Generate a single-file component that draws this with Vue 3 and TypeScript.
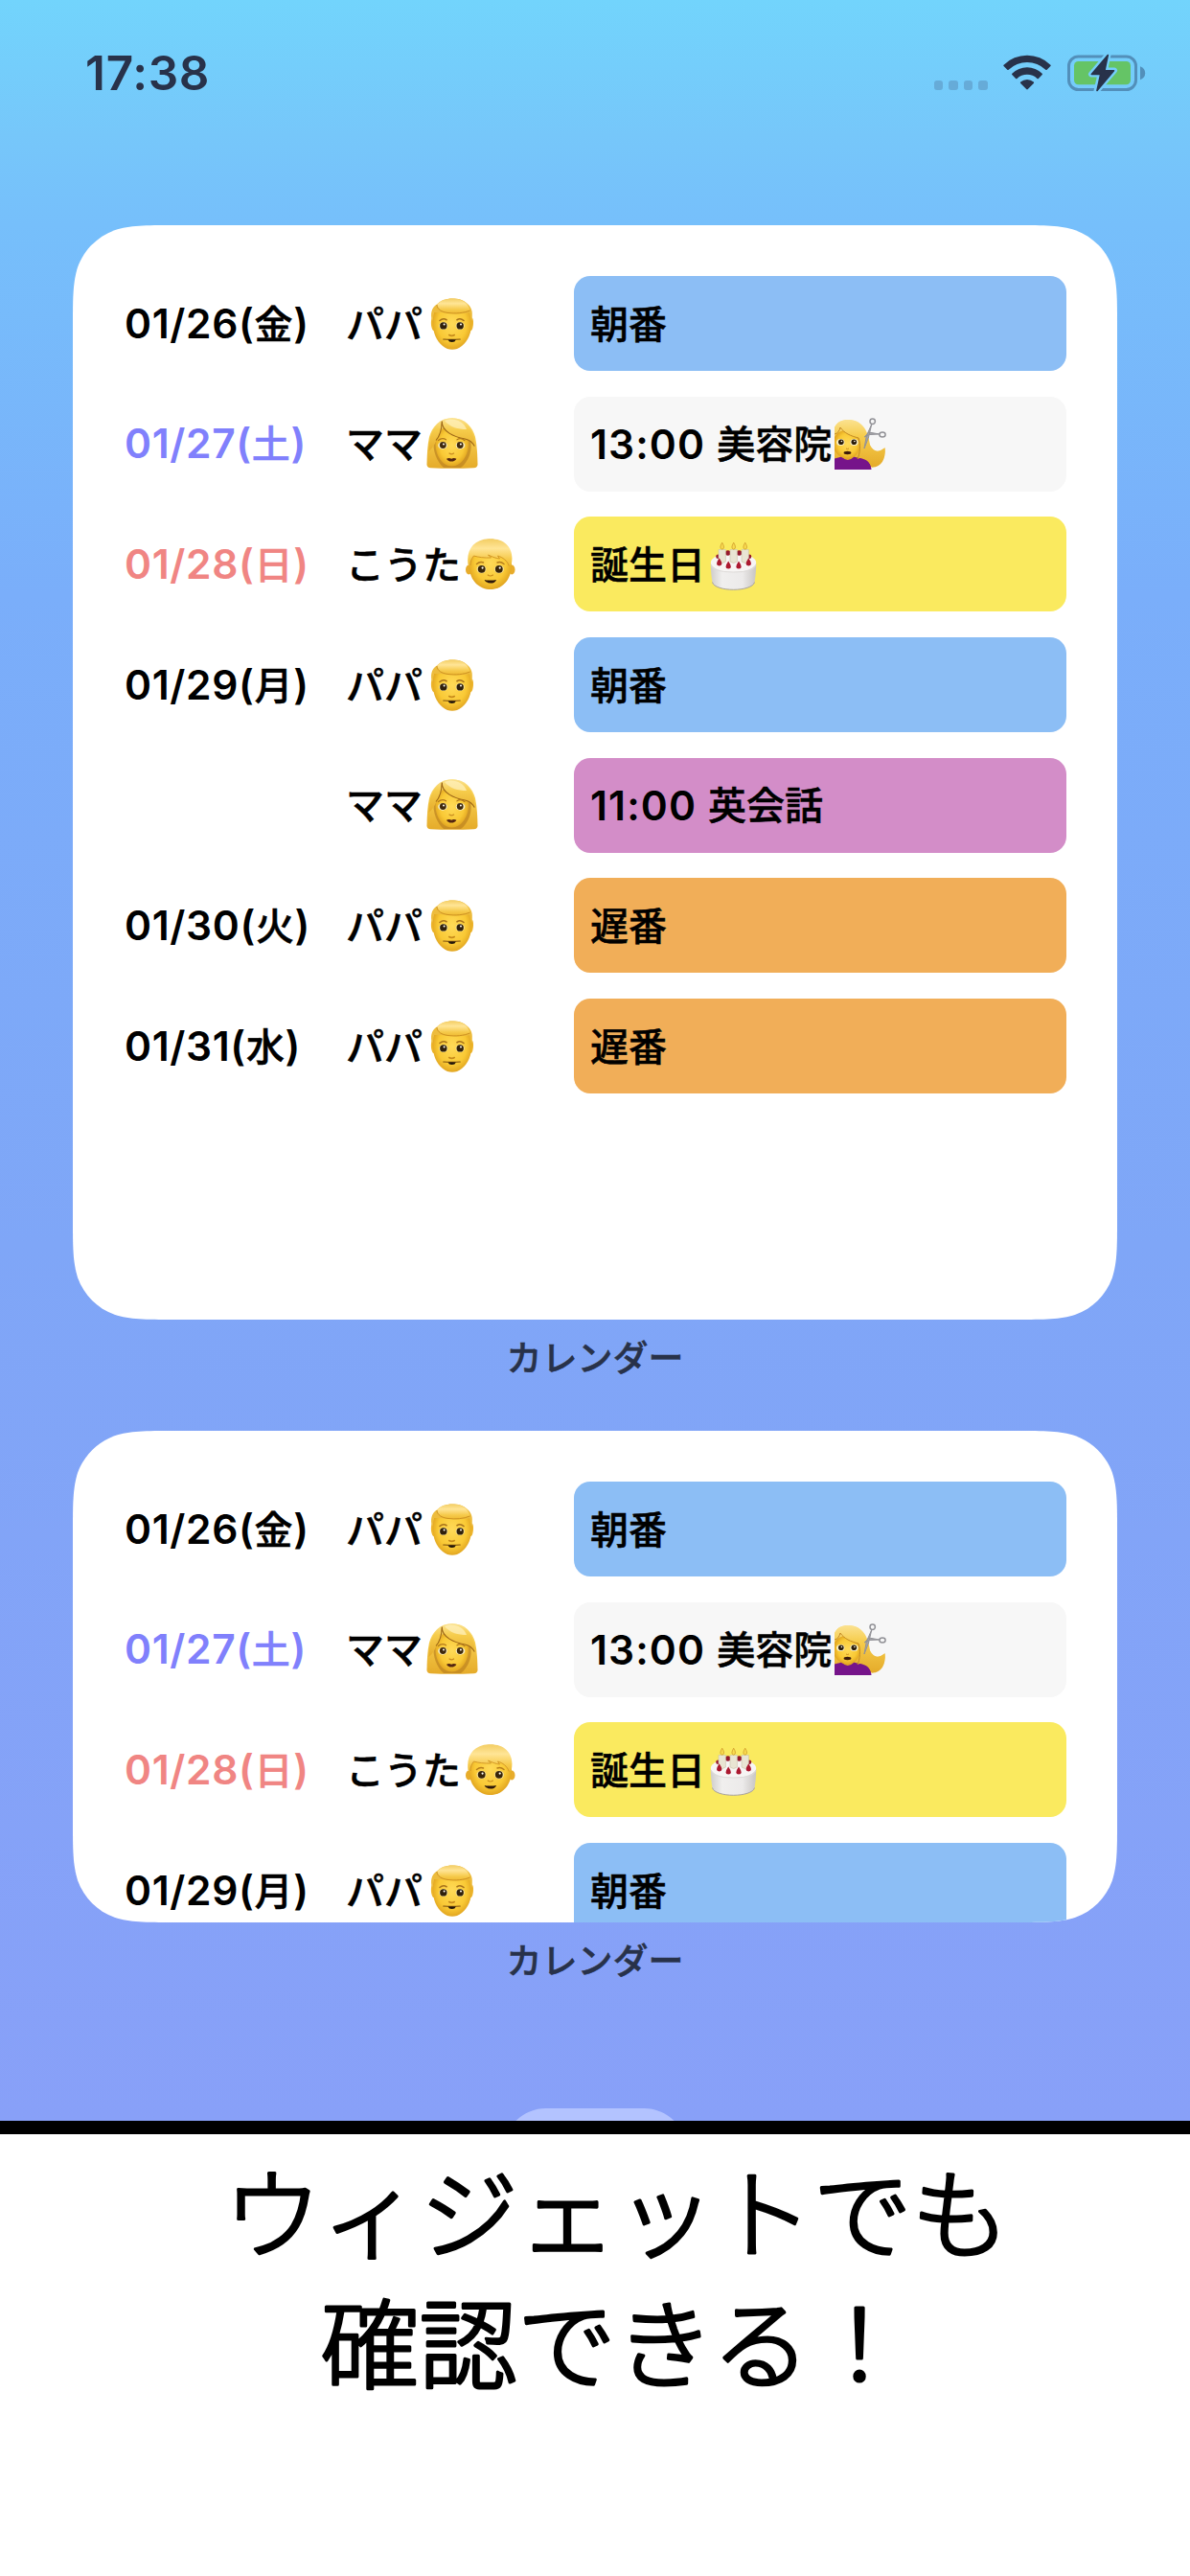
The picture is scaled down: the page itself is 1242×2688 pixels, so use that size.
<script setup lang="ts">
type Tone = 'weekday' | 'saturday' | 'sunday'

interface Entry {
  day: string
  weekday: string
  tone: Tone
  name: string
  face: string
  color: string
  time?: string
  title: string
  icon?: string
}

const entries: Entry[] = [
  { day: '01/26', weekday: '金', tone: 'weekday', name: 'パパ', face: 'man', color: 'blue', title: '朝番' },
  { day: '01/27', weekday: '土', tone: 'saturday', name: 'ママ', face: 'woman', color: 'plain', time: '13:00', title: '美容院', icon: 'haircut' },
  { day: '01/28', weekday: '日', tone: 'sunday', name: 'こうた', face: 'boy', color: 'yellow', title: '誕生日', icon: 'cake' },
  { day: '01/29', weekday: '月', tone: 'weekday', name: 'パパ', face: 'man', color: 'blue', title: '朝番' },
  { day: '', weekday: '', tone: 'weekday', name: 'ママ', face: 'woman', color: 'pink', time: '11:00', title: '英会話' },
  { day: '01/30', weekday: '火', tone: 'weekday', name: 'パパ', face: 'man', color: 'orange', title: '遅番' },
  { day: '01/31', weekday: '水', tone: 'weekday', name: 'パパ', face: 'man', color: 'orange', title: '遅番' },
]

// Continuous-curvature rounded rectangle, as used for home screen widgets.
function continuousRect(w: number, h: number, r: number): string {
  const a = 1.528665 * r
  const b = 1.088493 * r
  const c = 0.868407 * r
  const d = 0.631494 * r
  const e = 0.074911 * r
  const f = 0.372824 * r
  const g = 0.16906 * r
  return [
    `M${a} 0H${w - a}`,
    `C${w - b} 0 ${w - c} 0 ${w - d} ${e}`,
    `C${w - f} ${g} ${w - g} ${f} ${w - e} ${d}`,
    `C${w} ${c} ${w} ${b} ${w} ${a}`,
    `V${h - a}`,
    `C${w} ${h - b} ${w} ${h - c} ${w - e} ${h - d}`,
    `C${w - g} ${h - f} ${w - f} ${h - g} ${w - d} ${h - e}`,
    `C${w - c} ${h} ${w - b} ${h} ${w - a} ${h}`,
    `H${a}`,
    `C${b} ${h} ${c} ${h} ${d} ${h - e}`,
    `C${f} ${h - g} ${g} ${h - f} ${e} ${h - d}`,
    `C0 ${h - c} 0 ${h - b} 0 ${h - a}`,
    `V${a}`,
    `C0 ${b} 0 ${c} ${e} ${d}`,
    `C${g} ${f} ${f} ${g} ${d} ${e}`,
    `C${c} 0 ${b} 0 ${a} 0Z`,
  ].join('')
}

const widgets = [
  { id: 'large', height: 1142, rows: entries },
  { id: 'medium', height: 513, rows: entries.slice(0, 4) },
].map((w) => ({
  ...w,
  shape: { height: `${w.height}px`, clipPath: `path('${continuousRect(1090, w.height, 69)}')` },
}))
</script>

<template>
  <main class="page">
    <svg class="symbols" width="0" height="0" aria-hidden="true">
      <defs>
        <radialGradient id="skin" cx="50%" cy="48%" r="56%">
          <stop offset="0" stop-color="#ffda58" />
          <stop offset=".65" stop-color="#f9c935" />
          <stop offset="1" stop-color="#dc9d1c" />
        </radialGradient>
        <linearGradient id="hair" x1="0" y1="0" x2="0" y2="1">
          <stop offset="0" stop-color="#fbe290" />
          <stop offset=".35" stop-color="#f6cc4b" />
          <stop offset="1" stop-color="#e5ab2a" />
        </linearGradient>
        <linearGradient id="cap" x1="0" y1="0" x2="0" y2="1">
          <stop offset="0" stop-color="#f3cd63" />
          <stop offset=".35" stop-color="#ffe596" />
          <stop offset=".75" stop-color="#f6ca4b" />
          <stop offset="1" stop-color="#efbb35" />
        </linearGradient>
        <linearGradient id="icing" x1="0" y1="0" x2="1" y2="0">
          <stop offset="0" stop-color="#cfcdcb" />
          <stop offset=".25" stop-color="#f0efee" />
          <stop offset=".7" stop-color="#eceaea" />
          <stop offset="1" stop-color="#c8c5c3" />
        </linearGradient>
      </defs>

      <symbol id="man" viewBox="0 0 54 54">
        <path d="M6.500 20C4.600 22 4.600 27 5.600 31c.5 2.300 1.600 3.200 2.700 3.200M47.500 20c1.900 2 1.900 7 .9 11-.5 2.300-1.600 3.200-2.700 3.200" fill="#eeb52c" />
        <path d="M27 2C14 2 6.500 9 6.500 23c0 14 4.500 22 10.500 27 3.400 2.700 6.500 3.800 10 3.800s6.600-1.100 10-3.800c6-5 10.500-13 10.500-27C47.500 9 40 2 27 2Z" fill="url(#skin)" />
        <path d="M11 6.500C5 10 4 17 6 24c1-4 1.800-6 2-9 4 0 8 0 12 .6 10 1.300 18 .9 25-.3 1 3.700 1 5.700 2 8.700 1.600-7 1.400-13-3.500-17.500C38 1 33 .4 27.500.4 20 .4 14.500 2.500 11 6.500Z" fill="#edbc3d" />
        <path d="M11 6.800C14 2.600 20 .4 27.500.4c8 0 15.500 3 18 12C40 15.500 30 16.400 22 15.200c-6-.9-10.500-3.500-11-8.400Z" fill="url(#cap)" />
        <path d="M11 7c.5 5 5 7.500 11 8.400 8 1.200 17 .4 23.500-2.400" fill="none" stroke="#c98c1d" stroke-width=".9" />
        <path d="M14 23.500q3.500-3 7-.8M32 22.700q3.500-2.200 7 .8" fill="none" stroke="#a8721a" stroke-width="1.600" stroke-linecap="round" />
        <ellipse cx="17.800" cy="29" rx="4.600" ry="4" fill="#f6e6a6" /><ellipse cx="35.200" cy="29" rx="4.600" ry="4" fill="#f6e6a6" />
        <circle cx="17.800" cy="28.900" r="3.700" fill="#30200b" /><circle cx="35.200" cy="28.900" r="3.700" fill="#30200b" />
        <circle cx="18.600" cy="27.600" r="1" fill="#fff" /><circle cx="36" cy="27.600" r="1" fill="#fff" />
        <path d="M23.700 38.500q2.800 1.800 5.600 0" fill="none" stroke="#c88c1c" stroke-width="1.600" stroke-linecap="round" />
        <path d="M17.800 43q8.700.8 17.400 0" fill="none" stroke="#7a4c0d" stroke-width="1.200" stroke-linecap="round" />
        <path d="M22.500 43.400h8.400q-1 2.500-4.200 2.500t-4.200-2.500Z" fill="#21150a" />
      </symbol>

      <symbol id="woman" viewBox="0 0 54 54">
        <path d="M27 .3C14 .3 6 9 3 20 1 29 .7 40 .5 48.500c0 2.500 1.500 3.500 4 3.700 15 .8 30 .8 45 0 2.500-.2 4-1.200 4-3.700C53.300 40 53 29 51 20 48 9 40 .3 27 .3Z" fill="url(#hair)" />
        <path d="M8 25C6 33 11 46 18 52h18c8-6 12.500-19 10-28Z" fill="#b97e1d" opacity=".65" />
        <path d="M27 8C16 8 9.500 17 9.500 27c0 12 7 23.500 17 23.500S44 39 44 27C44 17 38 8 27 8Z" fill="url(#skin)" />
        <path d="M16 3C6 9 2 22 2.500 35 6 32 9 28 10.500 23 13.500 19 16 13 16.500 8 19 16 30 20 40 22c4 1 8 4.500 10.500 8C51 15 43 .5 27 .3 22.500.3 19 1.200 16 3Z" fill="url(#hair)" />
        <path d="M16.300 3.500c-.5 11 13 16.500 24 18.500 4 .8 8 4 10 7.500M16.200 4C16 13 14 19 10 23.500" fill="none" stroke="#9b6516" stroke-width="1.100" />
        <path d="M19 3c8-4 20 0 23 9-9 0-17-2-23-9Z" fill="#fff0bb" opacity=".75" />
        <path d="M12.500 23.500q4-3.400 8-.7M32 22.800q4-2.700 8 .9" fill="none" stroke="#b2781b" stroke-width="1.200" stroke-linecap="round" />
        <ellipse cx="17" cy="28.800" rx="4.800" ry="3.900" fill="#f8efc8" /><ellipse cx="35.500" cy="28.800" rx="4.800" ry="3.900" fill="#f8efc8" />
        <circle cx="17.300" cy="28.500" r="3.400" fill="#402a0c" /><circle cx="35.200" cy="28.500" r="3.400" fill="#402a0c" />
        <circle cx="18" cy="27.500" r="1" fill="#fff" /><circle cx="35.900" cy="27.500" r="1" fill="#fff" />
        <path d="M24 37q2.300 1.800 4.600 0" fill="none" stroke="#ca8d20" stroke-width="1.200" stroke-linecap="round" />
        <path d="M21 42.700q2.800-1.200 5.200 0 2.400-1.200 5.200 0-1.500 2.800-5.200 2.800T21 42.700Z" fill="#542611" />
      </symbol>

      <symbol id="boy" viewBox="0 0 54 54">
        <ellipse cx="4.300" cy="32.500" rx="3.300" ry="5" fill="#e8ac2b" /><ellipse cx="49.200" cy="32.500" rx="3.300" ry="5" fill="#e8ac2b" />
        <path d="M26.800.8C12 .8 4.500 11 4.500 27c0 16 10 26 22.300 26S49 43 49 27C49 11 41.500.8 26.800.8Z" fill="url(#skin)" />
        <path d="M26.800.3C10 .3 1.500 11 3.500 27c1 1 1.800 1.600 2.400 1.600C6 24 7 21 9.500 18c5 1.500 11 2.300 18 2L24.500 17c5 2.500 8.500 3.600 12 4L34.500 18c5 1.500 10 5 11.800 10.500 1-.4 1.700-1 2.400-1.500C52 12 44 .3 26.800.3Z" fill="url(#cap)" />
        <path d="M5.900 28C6 24 7 21 9.500 18c5 1.500 11 2.300 18 2L24.500 17c5 2.500 8.500 3.600 12 4L34.500 18c5 1.500 10 5 11.800 10.500" fill="none" stroke="#cf9324" stroke-width=".9" />
        <path d="M12.500 26.500q3.500-3 7-1.500M34 25q3.500-1.500 7 1.500" fill="none" stroke="#b57c1b" stroke-width="1.400" stroke-linecap="round" />
        <ellipse cx="17.500" cy="32" rx="5" ry="4.200" fill="#f6e39a" /><ellipse cx="36" cy="32" rx="5" ry="4.200" fill="#f6e39a" />
        <circle cx="17.700" cy="31.800" r="3.900" fill="#382509" /><circle cx="35.800" cy="31.800" r="3.900" fill="#382509" />
        <circle cx="18.600" cy="30.600" r="1.100" fill="#fff" /><circle cx="36.700" cy="30.600" r="1.100" fill="#fff" />
        <path d="M24.200 38q2.600 2 5.200 0" fill="none" stroke="#c88c1c" stroke-width="1.200" stroke-linecap="round" />
        <path d="M20.500 42.900q6.300 1.300 12.600 0-1.300 3.600-6.300 3.600t-6.300-3.600Z" fill="#2d170a" />
      </symbol>

      <symbol id="haircut" viewBox="0 0 54 54">
        <path d="M0 10C3 4 8 2 14 2c10 0 17 6 19 15 2 10 6 17 12 18 3 0 5-1.500 7.500-3.800C53.500 41 49 50 39 51.500L30 49 0 44Z" fill="url(#hair)" />
        <path d="M0 54V42.500c4-1 7-1.700 8-2.500h11c3 1.700 8 1.500 12.500 3.500 4.500 2 6.500 5 7 10.500Z" fill="#76148a" />
        <path d="M7.500 40.500q6 7 13 0l-1-5h-11Z" fill="#e2a526" />
        <path d="M0 20C3 15 7 13 12 13c9 0 15 5 15 14 0 9-6 15.500-13.500 15.500C8 42.500 3 39 0 34Z" fill="url(#skin)" />
        <path d="M0 17C3 16.500 5 14 6 10c4 6 11 9 19 11 2.500 6 1.500 17-1 22 3-1 5.500-3.500 7-7 1 6 5 10 8 15.500 9 .5 15-8 13.500-20.300-8 6-13 4-15.500-3C35 12 28 2 14 2 8 2 3 4 0 10Z" fill="url(#hair)" />
        <path d="M6 10c4 6 11 9 19 11 2.500 6 1.500 17-1 22M0 17c3-.5 5-3 6-7" fill="none" stroke="#bd8220" stroke-width=".9" />
        <ellipse cx="6.300" cy="25.500" rx="4.200" ry="3.500" fill="#f8efc8" /><ellipse cx="20.500" cy="25.500" rx="4.200" ry="3.500" fill="#f8efc8" />
        <circle cx="6.800" cy="25.300" r="2.800" fill="#2c1d09" /><circle cx="20.300" cy="25.300" r="2.800" fill="#2c1d09" />
        <circle cx="7.400" cy="24.500" r=".8" fill="#fff" /><circle cx="20.900" cy="24.500" r=".8" fill="#fff" />
        <ellipse cx="13.500" cy="36.500" rx="3.900" ry="1.700" fill="#3c1a0a" />
        <path d="M12 32q1.500 1 3 0" fill="none" stroke="#ca8d20" stroke-width="1" />
        <path d="M38.800 6.500 35.600 20 31 32l2.300-13ZM46.800 17l-10.500.5-5 2.500 4.500-5Z" fill="#a4a4a8" stroke="#929297" stroke-width="1" />
        <circle cx="39.700" cy="3.700" r="2.700" fill="none" stroke="#929297" stroke-width="1.500" />
        <ellipse cx="50" cy="17.500" rx="3.100" ry="2.500" fill="none" stroke="#929297" stroke-width="1.500" />
      </symbol>

      <symbol id="cake" viewBox="0 0 54 54">
        <path d="M3.800 26c0 8 .8 14 1.700 19.500C6.500 50.500 17 53.300 27.500 53.300s21-2.800 22-7.800C50.400 40 51.200 34 51.200 26Z" fill="url(#icing)" />
        <path d="M5.500 45.500c1 5 11.500 7.800 22 7.800s21-2.800 22-7.800" fill="none" stroke="#a9a29a" stroke-width="1" />
        <ellipse cx="27.500" cy="25" rx="23.700" ry="9.800" fill="#f7f5f4" />
        <path d="M4 27q1 8 23.500 8T51 27" fill="none" stroke="#dedbd9" stroke-width="1" />
        <g fill="#96182c"><circle cx="21.700" cy="15" r="2.800" /><circle cx="33.500" cy="15" r="2.800" /><circle cx="11.500" cy="18.700" r="2.300" /><circle cx="44" cy="18.700" r="2.300" /></g>
        <g fill="#e9e5d3" stroke="#c9c3ab" stroke-width=".6">
          <path d="M12 11.500h7.400V24q-3.700 3-7.400 0ZM24 11.500h7.400V24q-3.700 3-7.400 0ZM36 11.500h7.400V24q-3.700 3-7.400 0Z" />
        </g>
        <g fill="#f9dc50" stroke="#cf9b2b" stroke-width=".8">
          <path d="M15.700 4.200q-3.600 6 0 7 3.600-1 0-7ZM27.700 4.200q-3.600 6 0 7 3.600-1 0-7ZM39.700 4.200q-3.600 6 0 7 3.600-1 0-7Z" />
        </g>
        <g fill="#ac1930">
          <path d="M12.700 20.300q-5.400 8 0 8.200 5.400-.2 0-8.200ZM22.200 23.500q-5.400 7.800 0 8 5.400-.2 0-8ZM33 23.500q-5.400 7.800 0 8 5.400-.2 0-8ZM43.300 20.300q-5.400 8 0 8.200 5.400-.2 0-8.200Z" />
        </g>
      </symbol>
    </svg>

    <section class="phone">
      <header class="status">
        <span class="clock">17:38</span>
        <span class="indicators">
          <span class="dots"><i v-for="n in 4" :key="n"></i></span>
          <svg class="wifi" width="50" height="37" viewBox="0 0 50 37" fill="#28324a">
            <path d="M.6 10.700a35 35 0 0 1 48.800 0q.6.700 0 1.400l-3.700 3.700q-.7.600-1.400 0a28 28 0 0 0-38.600 0q-.7.600-1.400 0L.6 12.100q-.6-.7 0-1.400Z" />
            <path d="M9.300 19.700a22.600 22.600 0 0 1 31.400 0q.6.700 0 1.400l-3.800 3.800q-.7.600-1.400 0a15.300 15.300 0 0 0-21 0q-.7.600-1.400 0l-3.800-3.800q-.6-.7 0-1.400Z" />
            <path d="M18.200 28.600a10.300 10.300 0 0 1 13.600 0q.7.700 0 1.400l-6 6.100q-.8.700-1.600 0l-6-6.100q-.7-.7 0-1.400Z" />
          </svg>
          <svg class="battery" width="82" height="42" viewBox="0 0 82 42">
            <defs>
              <mask id="bolt-gap">
                <rect width="82" height="42" fill="#fff" />
                <path d="M42.500 2 25 22.500h9.500L30.500 40 49 18.500h-9.800Z" fill="#000" stroke="#000" stroke-width="6" stroke-linejoin="round" />
              </mask>
            </defs>
            <g mask="url(#bolt-gap)">
              <rect x="1.500" y="4" width="70" height="34.500" rx="10" fill="none" stroke="#528fba" stroke-width="3" />
              <rect x="7" y="9" width="59" height="24.300" rx="4.500" fill="#65c466" />
            </g>
            <path d="M76 14.200q5.200 2 5.200 7t-5.200 7Z" fill="#528fba" />
            <path d="M42.300 2.500 25.300 22.500h9.400L31 39.500 48.500 18.800h-9.600Z" fill="#28324a" stroke="#28324a" stroke-width="1.600" stroke-linejoin="round" />
          </svg>
        </span>
      </header>

      <div v-for="w in widgets" :key="w.id" class="slot">
        <article class="widget" :style="w.shape">
          <div v-for="(row, i) in w.rows" :key="i" class="row">
            <span class="date" :class="row.tone">
              <template v-if="row.day">{{ row.day }}(<span class="jp">{{ row.weekday }}</span>)</template>
            </span>
            <span class="person">
              <span class="jp">{{ row.name }}</span>
              <svg class="emoji"><use :href="`#${row.face}`" /></svg>
            </span>
            <span class="event" :class="row.color">
              <span v-if="row.time" class="time">{{ row.time }}</span>
              <span class="jp">{{ row.title }}</span>
              <svg v-if="row.icon" class="emoji" :class="row.icon"><use :href="`#${row.icon}`" /></svg>
            </span>
          </div>
        </article>
        <p class="label">カレンダー</p>
      </div>

      <div class="page-pill"></div>
    </section>

    <section class="caption">
      <svg width="1242" height="300" viewBox="0 0 1242 300">
        <text x="643.500" y="121.500">ウィジェットでも</text>
        <text x="641.500" y="258">確認できる！</text>
      </svg>
    </section>
  </main>
</template>

<style>
body {
  margin: 0;
  background: #fff;
}
</style>

<style scoped>
.page {
  width: 1242px;
  height: 2688px;
  overflow: hidden;
  display: flex;
  flex-direction: column;
  font-family: Inter, "Noto Sans CJK JP", sans-serif;
  color: #000;
}
.symbols {
  position: absolute;
}
.phone {
  box-sizing: border-box;
  flex: none;
  height: 2226.500px;
  border-bottom: 14px solid #000;
  overflow: hidden;
  display: flex;
  flex-direction: column;
  align-items: center;
  background: linear-gradient(180deg, #72d4fc 0, #76c7fa 140px, #76bffb 235px, #7aaefa 620px, #7fa6f7 1300px, #88a0f8 2212px);
}
.status {
  box-sizing: border-box;
  flex: none;
  width: 1242px;
  height: 235px;
  padding: 52px 46px 0 89px;
  display: flex;
  justify-content: space-between;
  align-items: flex-start;
}
.clock {
  font-size: 49.500px;
  line-height: 48px;
  font-weight: 600;
  letter-spacing: 0.700px;
  color: #28324a;
}
.indicators {
  display: flex;
  align-items: flex-start;
}
.dots {
  display: flex;
  gap: 6px;
  margin: 31.500px 16.500px 0 0;
}
.dots i {
  width: 9.500px;
  height: 10px;
  border-radius: 3px;
  background: #66abd8;
}
.wifi {
  margin: 5px 17px 0 0;
}
.battery {
  margin-top: 3px;
}
.slot {
  flex: none;
  height: 1258px;
}
.slot + .slot {
  height: 629px;
}
.widget {
  box-sizing: border-box;
  width: 1090px;
  padding: 53px 53px 0;
  background: #fff;
  display: flex;
  flex-direction: column;
  gap: 26.700px;
}
.row {
  flex: none;
  display: grid;
  grid-template-columns: 232px 238px 514px;
  grid-template-rows: 99px;
  height: 99px;
  align-items: center;
  font-size: 42.500px;
  line-height: 97px;
  font-weight: 560;
}
.jp {
  font-family: "Noto Sans CJK JP", sans-serif;
  font-size: 40px;
  font-weight: 500;
  -webkit-text-stroke: 0.500px currentColor;
}
.date {
  white-space: nowrap;
  padding-left: 1px;
  margin-top: -2px;
  letter-spacing: 0.650px;
}
.person,
.event {
  display: flex;
  align-items: center;
  height: 99px;
}
.saturday {
  color: #8080fc;
}
.sunday {
  color: #f08583;
}
.person .jp,
.event .jp {
  line-height: 60px;
  margin-top: -4px;
}
.event {
  box-sizing: border-box;
  padding-left: 17px;
  border-radius: 17px;
}
.emoji {
  flex: none;
  width: 54px;
  height: 54px;
  margin-left: 4px;
}
.event .cake {
  margin-left: 2px;
}
.event .haircut {
  margin-left: 3px;
}
.time {
  margin-right: 12px;
  letter-spacing: 1.100px;
}
.blue {
  background: #8cbef5;
}
.plain {
  background: #f7f7f7;
}
.yellow {
  background: #faea5f;
}
.pink {
  background: #d38dc8;
}
.orange {
  background: #f1ae58;
}
.label {
  margin: 12px 0 0;
  text-align: center;
  font-family: "Noto Sans CJK JP", sans-serif;
  font-size: 37px;
  line-height: 52px;
  font-weight: 500;
  color: #28324a;
  -webkit-text-stroke: 0.500px currentColor;
}
.page-pill {
  flex: none;
  width: 192px;
  height: 90px;
  margin-top: 78px;
  border-radius: 45px;
  background: #b3c3ff;
}
.caption {
  flex: 1;
}
.caption svg {
  display: block;
}
.caption text {
  font-family: "Noto Sans CJK JP", sans-serif;
  font-size: 102.600px;
  font-weight: 300;
  text-anchor: middle;
  fill: #000;
  stroke: #000;
  stroke-width: 3.200px;
  stroke-linejoin: round;
}
</style>
